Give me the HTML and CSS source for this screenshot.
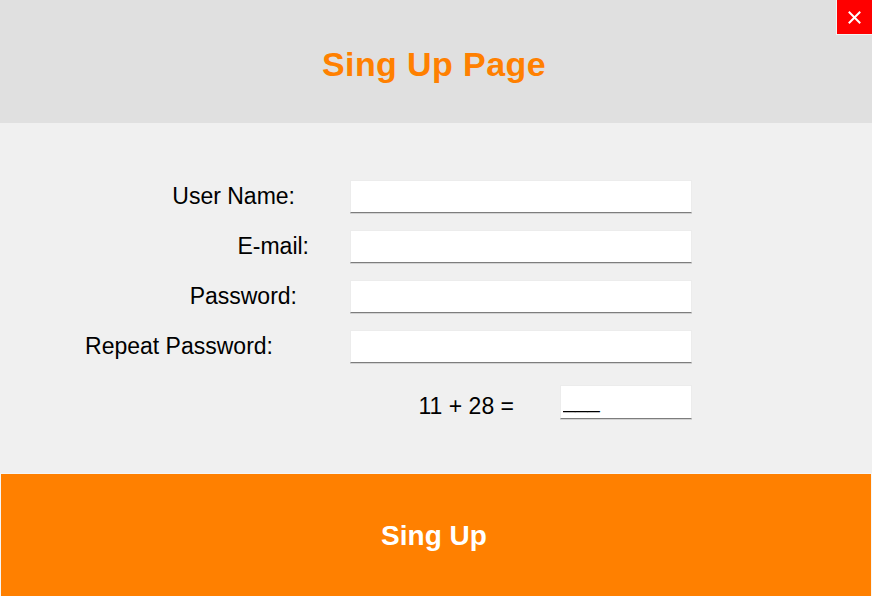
FILE: index.html
```html
<!DOCTYPE html>
<html>
<head>
<meta charset="utf-8">
<title>Sing Up Page</title>
<link rel="stylesheet" href="styles.css">
</head>
<body>
<div class="window">
  <header class="header">
    <h1 class="title">Sing Up Page</h1>
    <button class="close" type="button" aria-label="Close">
      <svg width="13" height="13" viewBox="0 0 13 13"><path d="M1.5 1.5 L11.5 11.5 M11.5 1.5 L1.5 11.5" stroke="#fff" stroke-width="2" stroke-linecap="square"/></svg>
    </button>
  </header>
  <main class="content">
    <div class="form">
      <div class="row">
        <label class="label label-user">User Name:</label>
        <input class="field" type="text">
      </div>
      <div class="row">
        <label class="label label-email">E-mail:</label>
        <input class="field" type="text">
      </div>
      <div class="row">
        <label class="label label-pass">Password:</label>
        <input class="field" type="password">
      </div>
      <div class="row">
        <label class="label label-repeat">Repeat Password:</label>
        <input class="field" type="password">
      </div>
      <div class="captcha">
        <span class="question">11 + 28 =</span>
        <input class="field field-small" type="text" value="___">
      </div>
    </div>
  </main>
  <button class="submit" type="button">Sing Up</button>
</div>
</body>
</html>
```

FILE: styles.css
```css
html, body {
  margin: 0;
  padding: 0;
  width: 872px;
  height: 596px;
  overflow: hidden;
  background: #f0f0f0;
  font-family: "Liberation Sans", Arial, sans-serif;
}

.window {
  position: relative;
  width: 872px;
  height: 596px;
  display: flex;
  flex-direction: column;
}

.header {
  height: 123px;
  background: #e0e0e0;
  display: flex;
  align-items: center;
  justify-content: center;
  flex-shrink: 0;
}

.title {
  margin: 4px 4px 0 0;
  font-size: 34px;
  font-weight: bold;
  letter-spacing: 0.4px;
  color: #ff8000;
  line-height: 1;
}

.close {
  position: absolute;
  top: 0;
  right: 0;
  width: 36px;
  height: 35px;
  padding: 0;
  margin: 0;
  background: #ff0000;
  border: none;
  border-left: 1px solid #f4f4f4;
  border-bottom: 1px solid #f4f4f4;
  box-sizing: border-box;
  display: flex;
  align-items: center;
  justify-content: center;
}

.content {
  height: 350px;
  flex-shrink: 0;
}

.form {
  width: 692px;
  padding-top: 57px;
  display: flex;
  flex-direction: column;
  gap: 17px;
}

.row {
  display: flex;
  align-items: center;
  height: 33px;
}

.label {
  width: 350px;
  box-sizing: border-box;
  text-align: right;
  font-size: 23px;
  color: #000;
  margin-top: -1px;
}

.label-user { padding-right: 55px; }
.label-email { padding-right: 41px; }
.label-pass { padding-right: 53px; }
.label-repeat { padding-right: 77px; }

.field {
  width: 342px;
  height: 33px;
  box-sizing: border-box;
  margin: 0;
  padding: 0 2px;
  background: #fff;
  border: 1px solid #ececec;
  border-bottom: 1px solid #7d7d7d;
  box-shadow: 0 1px 0 #d2d2d2;
  outline: none;
  font-family: "Liberation Sans", Arial, sans-serif;
  font-size: 22px;
  color: #000;
}

.captcha {
  margin-top: 5px;
  display: flex;
  align-items: center;
  justify-content: flex-end;
  height: 34px;
}

.question {
  font-size: 23px;
  color: #000;
  margin-right: 46px;
  margin-top: 9px;
}

.field-small {
  width: 132px;
  height: 34px;
  padding: 0 2px 2px;
}

.submit {
  flex: 1;
  width: 872px;
  margin: 0;
  padding: 2px 4px 0 0;
  background: #ff8000;
  border: 1px solid #f6f6f6;
  border-bottom: none;
  color: #fff;
  font-family: "Liberation Sans", Arial, sans-serif;
  font-size: 28px;
  font-weight: bold;
}
```
